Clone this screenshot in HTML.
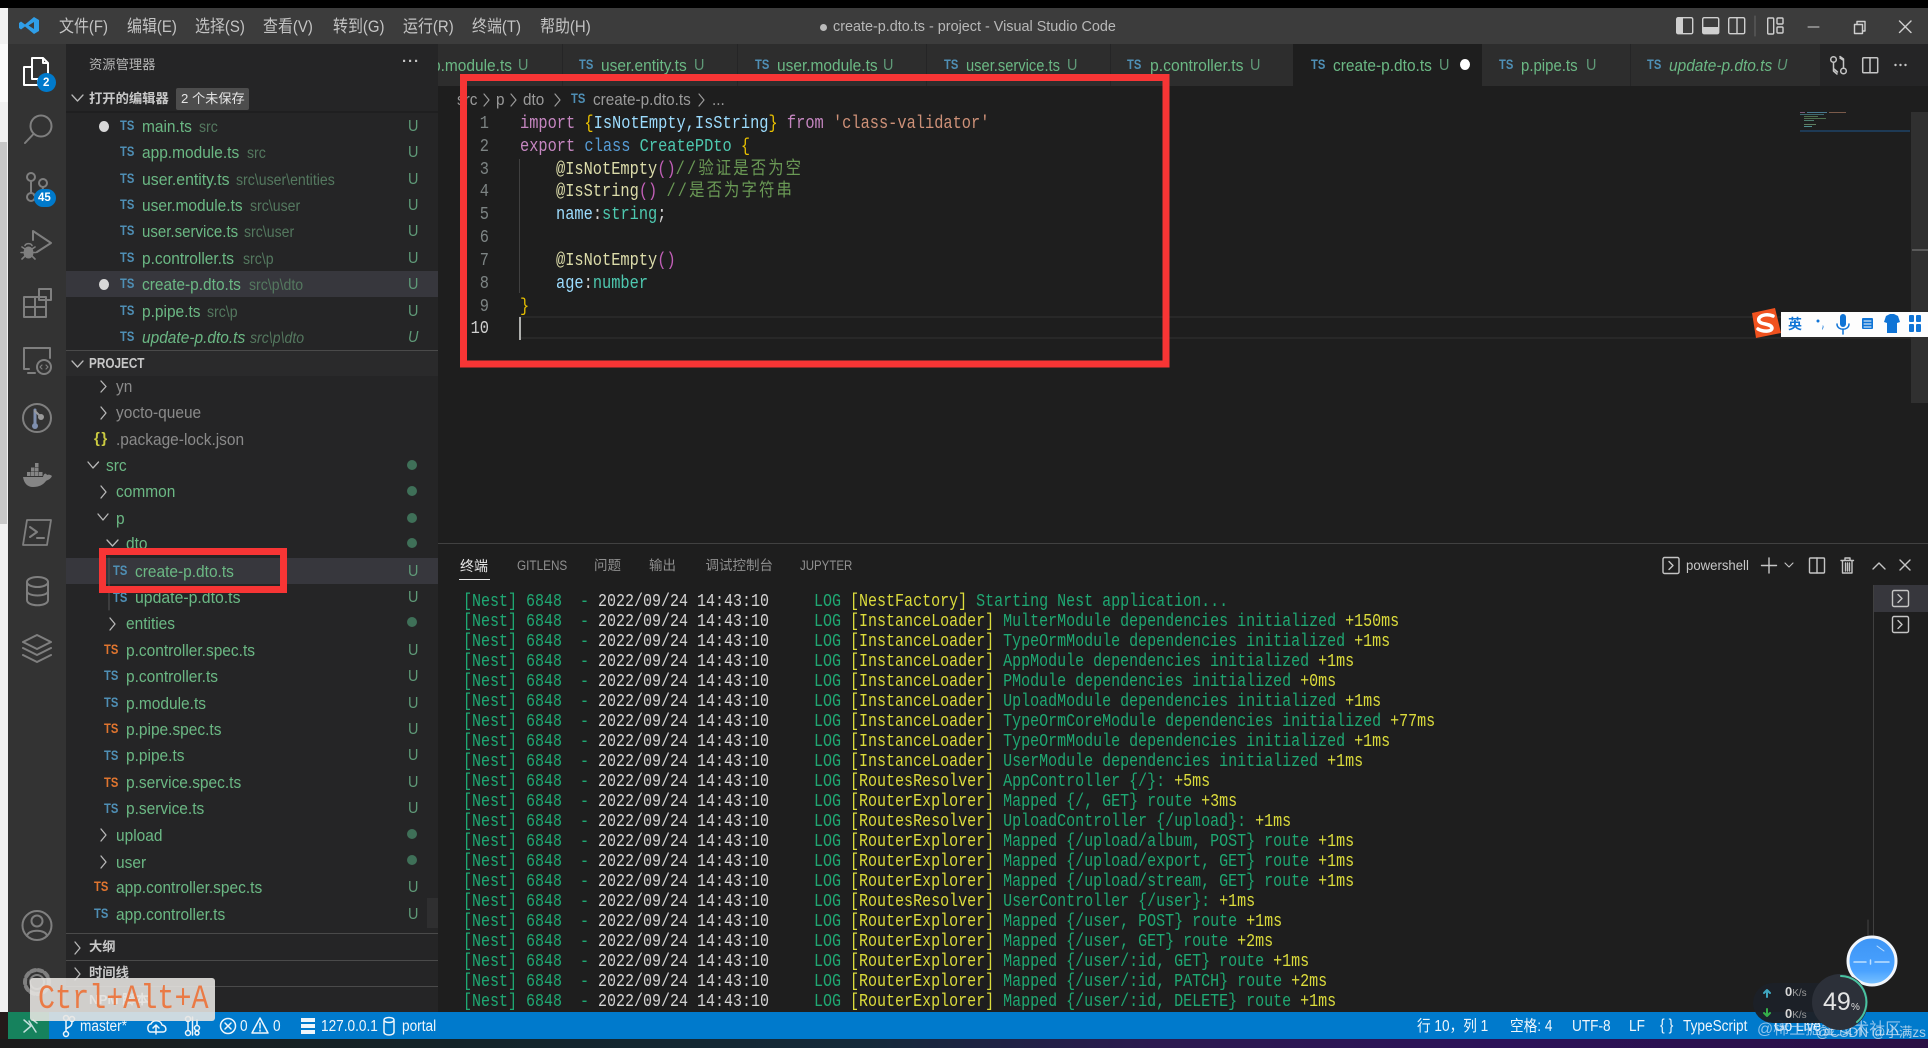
<!DOCTYPE html>
<html><head><meta charset="utf-8"><title>create-p.dto.ts</title>
<style>
html,body{margin:0;padding:0;background:#1e1e1e}
#r{position:relative;width:1928px;height:1048px;overflow:hidden;background:#1e1e1e;font-family:"Liberation Sans","Noto Sans CJK SC",sans-serif}
.b{position:absolute}
.s{position:absolute;white-space:pre;line-height:20px;transform-origin:0 50%}
.l{font-size:17px;transform:scaleX(.91);color:#6bb884}
.d{font-size:15.5px;transform:scaleX(.91);color:#54785f}
.f{font-size:17px;transform:scaleX(.91);color:#8a8a8a}
.u{font-size:16px;transform:scaleX(.9);color:#5f9a78;margin-top:1px}
.ts{font-size:14px;font-weight:bold;transform:scaleX(.8);color:#4f8fb5}
.o{color:#e0752f}
.m{font-size:17px;transform:scaleX(.88);color:#c4c4c4}
.h{font-size:13.3px;color:#b5b5b5}
.hb{font-size:13.3px;font-weight:bold;color:#c8c8c8}
.p{font-size:13.5px;color:#8f8f8f}
.st{font-size:15.5px;transform:scaleX(.88);color:#eef6fb;margin-top:1px}
.bc{font-size:17px;transform:scaleX(.9);color:#9a9a9a}
.ct{font:18px/23px "Liberation Mono","Noto Sans CJK SC",monospace;transform:scaleX(.852);white-space:pre;position:absolute;transform-origin:0 50%;color:#9cdcfe}
.ct s{text-decoration:none;color:#6a9955;letter-spacing:2.5px}
.n{font:18px/23px "Liberation Mono",monospace;transform:scaleX(.852);position:absolute;color:#7d8484;text-align:right;width:32px;transform-origin:100% 50%;left:457px}
.pu{color:#c586c0}.go{color:#e8c000}.st1{color:#ce9178}.bl{color:#569cd6}.te{color:#4ec9b0}.fn{color:#dcdcaa}.pa{color:#c25fb8}.wh{color:#d4d4d4}
#t{position:absolute;left:463px;top:592px;font:18px/20px "Liberation Mono",monospace;transform:scaleX(.8333);transform-origin:0 0;white-space:pre;color:#1fa873}
#t i{font-style:normal;color:#d4d4d4}
#t b{font-weight:normal;color:#dcdc3c}
</style></head><body><div id="r">

<!-- window frame -->
<div class="b" style="left:0;top:0;width:1928px;height:8px;background:#000"></div>
<div class="b" style="left:0;top:8px;width:8px;height:1004px;background:#f1f1f1"></div>
<div class="b" style="left:0;top:44px;width:10px;height:58px;background:#fafafa"></div>
<div class="b" style="left:0;top:142px;width:7px;height:382px;background:#c8c8c8"></div>
<div class="b" style="left:0;top:1012px;width:8px;height:36px;background:#241a1a"></div>
<div class="b" style="left:8px;top:8px;width:1920px;height:36px;background:#3c3c3c"></div>
<div class="b" style="left:8px;top:44px;width:58px;height:968px;background:#333"></div>
<div class="b" style="left:66px;top:44px;width:372px;height:968px;background:#252526"></div>

<!-- tabs bar -->
<div class="b" style="left:438px;top:44px;width:1490px;height:42px;background:#252526"></div>
<div class="b" style="left:438px;top:44px;width:124px;height:42px;background:#2d2d2d;overflow:hidden"><span class="s l" style="left:-6px;top:12px">p.module.ts</span></div>
<div class="b" style="left:563px;top:44px;width:174px;height:42px;background:#2d2d2d"></div>
<div class="b" style="left:738px;top:44px;width:188px;height:42px;background:#2d2d2d"></div>
<div class="b" style="left:927px;top:44px;width:183px;height:42px;background:#2d2d2d"></div>
<div class="b" style="left:1111px;top:44px;width:182px;height:42px;background:#2d2d2d"></div>
<div class="b" style="left:1293px;top:44px;width:189px;height:42px;background:#1e1e1e"></div>
<div class="b" style="left:1482px;top:44px;width:148px;height:42px;background:#2d2d2d"></div>
<div class="b" style="left:1631px;top:44px;width:189px;height:42px;background:#2d2d2d"></div>

<!-- menu -->
<span class="s m" style="left:59px;top:17px">文件(F)</span>
<span class="s m" style="left:127px;top:17px">编辑(E)</span>
<span class="s m" style="left:195px;top:17px">选择(S)</span>
<span class="s m" style="left:263px;top:17px">查看(V)</span>
<span class="s m" style="left:333px;top:17px">转到(G)</span>
<span class="s m" style="left:403px;top:17px">运行(R)</span>
<span class="s m" style="left:472px;top:17px">终端(T)</span>
<span class="s m" style="left:540px;top:17px">帮助(H)</span>
<div class="b" style="left:820px;top:24px;width:7px;height:7px;border-radius:50%;background:#bbb"></div>
<span class="s" style="left:833px;top:17px;font-size:14.4px;color:#b8b8b8">create-p.dto.ts - project - Visual Studio Code</span>

<!-- tab labels -->
<span class="s u" style="left:518px;top:55px">U</span>
<span class="s ts" style="left:579px;top:54px">TS</span><span class="s l" style="left:601px;top:56px">user.entity.ts</span><span class="s u" style="left:694px;top:55px">U</span>
<span class="s ts" style="left:755px;top:54px">TS</span><span class="s l" style="left:777px;top:56px">user.module.ts</span><span class="s u" style="left:883px;top:55px">U</span>
<span class="s ts" style="left:944px;top:54px">TS</span><span class="s l" style="left:966px;top:56px;transform:scaleX(.865)">user.service.ts</span><span class="s u" style="left:1067px;top:55px">U</span>
<span class="s ts" style="left:1127px;top:54px">TS</span><span class="s l" style="left:1150px;top:56px;transform:scaleX(.925)">p.controller.ts</span><span class="s u" style="left:1250px;top:55px">U</span>
<span class="s ts" style="left:1311px;top:54px">TS</span><span class="s l" style="left:1333px;top:56px">create-p.dto.ts</span><span class="s u" style="left:1439px;top:55px">U</span>
<div class="b" style="left:1460px;top:59px;width:10px;height:11px;border-radius:50%;background:#fff"></div>
<span class="s ts" style="left:1499px;top:54px">TS</span><span class="s l" style="left:1521px;top:56px;transform:scaleX(.88)">p.pipe.ts</span><span class="s u" style="left:1586px;top:55px">U</span>
<span class="s ts" style="left:1647px;top:54px">TS</span><span class="s l" style="left:1669px;top:56px;font-style:italic">update-p.dto.ts</span><span class="s u" style="left:1777px;top:55px;font-style:italic">U</span>

<!-- sidebar headers -->
<span class="s h" style="left:89px;top:55px">资源管理器</span>
<span class="s" style="left:402px;top:52px;color:#c5c5c5;font-size:15px;font-weight:bold;letter-spacing:1px">···</span>
<span class="s hb" style="left:89px;top:89px">打开的编辑器</span>
<div class="b" style="left:176px;top:88px;width:73px;height:22px;background:#4d4d4d;border-radius:2px"></div>
<span class="s" style="left:181px;top:89px;font-size:13.2px;color:#e4e4e4">2 个未保存</span>
<div class="b" style="left:66px;top:111px;width:372px;height:2px;background:#1f1f20"></div>
<div class="b" style="left:66px;top:350px;width:372px;height:26px;background:#2a2a2b;border-top:1px solid #4a4a4a;box-sizing:border-box"></div>
<span class="s hb" style="left:89px;top:354px;font-size:14.5px;transform:scaleX(.81)">PROJECT</span>
<div class="b" style="left:66px;top:271px;width:372px;height:26px;background:#37373d"></div>
<div class="b" style="left:66px;top:558px;width:372px;height:26px;background:#37373d"></div>

<!-- open editors -->
<div class="b" style="left:99px;top:121px;width:10px;height:11px;border-radius:50%;background:#d8d8d8"></div>
<div class="b" style="left:99px;top:279px;width:10px;height:11px;border-radius:50%;background:#d8d8d8"></div>
<span class="s ts" style="left:120px;top:115px">TS</span><span class="s l" style="left:142px;top:117px">main.ts</span><span class="s d" style="left:199px;top:118px">src</span><span class="s u" style="left:408px;top:116px">U</span>
<span class="s ts" style="left:120px;top:141px">TS</span><span class="s l" style="left:142px;top:143px">app.module.ts</span><span class="s d" style="left:247px;top:144px">src</span><span class="s u" style="left:408px;top:142px">U</span>
<span class="s ts" style="left:120px;top:168px">TS</span><span class="s l" style="left:142px;top:170px;transform:scaleX(.93)">user.entity.ts</span><span class="s d" style="left:236px;top:171px">src\user\entities</span><span class="s u" style="left:408px;top:169px">U</span>
<span class="s ts" style="left:120px;top:194px">TS</span><span class="s l" style="left:142px;top:196px">user.module.ts</span><span class="s d" style="left:250px;top:197px">src\user</span><span class="s u" style="left:408px;top:195px">U</span>
<span class="s ts" style="left:120px;top:220px">TS</span><span class="s l" style="left:142px;top:222px;transform:scaleX(.885)">user.service.ts</span><span class="s d" style="left:244px;top:223px">src\user</span><span class="s u" style="left:408px;top:221px">U</span>
<span class="s ts" style="left:120px;top:247px">TS</span><span class="s l" style="left:142px;top:249px">p.controller.ts</span><span class="s d" style="left:243px;top:250px">src\p</span><span class="s u" style="left:408px;top:248px">U</span>
<span class="s ts" style="left:120px;top:273px">TS</span><span class="s l" style="left:142px;top:275px">create-p.dto.ts</span><span class="s d" style="left:249px;top:276px">src\p\dto</span><span class="s u" style="left:408px;top:274px">U</span>
<span class="s ts" style="left:120px;top:300px">TS</span><span class="s l" style="left:142px;top:302px">p.pipe.ts</span><span class="s d" style="left:207px;top:303px">src\p</span><span class="s u" style="left:408px;top:301px">U</span>
<span class="s ts" style="left:120px;top:326px">TS</span><span class="s l" style="left:142px;top:328px;font-style:italic">update-p.dto.ts</span><span class="s d" style="left:250px;top:329px;font-style:italic">src\p\dto</span><span class="s u" style="left:408px;top:327px;font-style:italic">U</span>

<!-- tree -->
<span class="s f" style="left:116px;top:377px">yn</span>
<span class="s f" style="left:116px;top:403px">yocto-queue</span>
<span class="s" style="left:94px;top:429px;font-size:15px;font-weight:bold;color:#cbcb41;letter-spacing:1.5px">{}</span>
<span class="s f" style="left:116px;top:430px">.package-lock.json</span>
<span class="s l" style="left:106px;top:456px">src</span>
<span class="s l" style="left:116px;top:482px">common</span>
<span class="s l" style="left:116px;top:509px">p</span>
<span class="s l" style="left:126px;top:534px">dto</span>
<span class="s ts" style="left:113px;top:560px">TS</span><span class="s l" style="left:135px;top:562px">create-p.dto.ts</span><span class="s u" style="left:408px;top:561px">U</span>
<span class="s ts" style="left:113px;top:587px">TS</span><span class="s l" style="left:135px;top:588px;transform:scaleX(.93)">update-p.dto.ts</span><span class="s u" style="left:408px;top:587px">U</span>
<span class="s l" style="left:126px;top:614px">entities</span>
<span class="s ts o" style="left:104px;top:639px">TS</span><span class="s l" style="left:126px;top:641px">p.controller.spec.ts</span><span class="s u" style="left:408px;top:640px">U</span>
<span class="s ts" style="left:104px;top:665px">TS</span><span class="s l" style="left:126px;top:667px">p.controller.ts</span><span class="s u" style="left:408px;top:666px">U</span>
<span class="s ts" style="left:104px;top:692px">TS</span><span class="s l" style="left:126px;top:694px">p.module.ts</span><span class="s u" style="left:408px;top:693px">U</span>
<span class="s ts o" style="left:104px;top:718px">TS</span><span class="s l" style="left:126px;top:720px">p.pipe.spec.ts</span><span class="s u" style="left:408px;top:719px">U</span>
<span class="s ts" style="left:104px;top:745px">TS</span><span class="s l" style="left:126px;top:746px">p.pipe.ts</span><span class="s u" style="left:408px;top:745px">U</span>
<span class="s ts o" style="left:104px;top:772px">TS</span><span class="s l" style="left:126px;top:773px">p.service.spec.ts</span><span class="s u" style="left:408px;top:772px">U</span>
<span class="s ts" style="left:104px;top:798px">TS</span><span class="s l" style="left:126px;top:799px">p.service.ts</span><span class="s u" style="left:408px;top:798px">U</span>
<span class="s l" style="left:116px;top:826px">upload</span>
<span class="s l" style="left:116px;top:853px">user</span>
<span class="s ts o" style="left:94px;top:876px">TS</span><span class="s l" style="left:116px;top:878px">app.controller.spec.ts</span><span class="s u" style="left:408px;top:877px">U</span>
<span class="s ts" style="left:94px;top:903px">TS</span><span class="s l" style="left:116px;top:905px">app.controller.ts</span><span class="s u" style="left:408px;top:904px">U</span>

<div class="b" style="left:427px;top:898px;width:11px;height:30px;background:#2f2f30"></div>
<div class="b" style="left:66px;top:933px;width:372px;height:1px;background:#4a4a4a"></div>
<div class="b" style="left:66px;top:960px;width:372px;height:1px;background:#4a4a4a"></div>
<div class="b" style="left:66px;top:986px;width:372px;height:1px;background:#4a4a4a"></div>
<span class="s hb" style="left:89px;top:937px">大纲</span>
<span class="s hb" style="left:89px;top:963px">时间线</span>
<span class="s hb" style="left:89px;top:990px">NPM 脚本</span>

<!-- breadcrumbs -->
<span class="s bc" style="left:457px;top:90px">src</span>
<span class="s bc" style="left:496px;top:90px">p</span>
<span class="s bc" style="left:523px;top:90px">dto</span>
<span class="s ts" style="left:571px;top:88px">TS</span>
<span class="s bc" style="left:593px;top:90px">create-p.dto.ts</span>
<span class="s bc" style="left:712px;top:90px">...</span>

<!-- editor -->
<div class="b" style="left:519px;top:316px;width:1392px;height:23px;border-top:2px solid #282828;border-bottom:2px solid #282828;box-sizing:border-box"></div>
<div class="b" style="left:519px;top:159px;width:1px;height:134px;background:#404040"></div>
<div class="b" style="left:519px;top:317px;width:2px;height:23px;background:#aeafad"></div>

<span class="n" style="top:113px">1</span>
<span class="n" style="top:136px">2</span>
<span class="n" style="top:159px">3</span>
<span class="n" style="top:181px">4</span>
<span class="n" style="top:204px">5</span>
<span class="n" style="top:227px">6</span>
<span class="n" style="top:250px">7</span>
<span class="n" style="top:273px">8</span>
<span class="n" style="top:296px">9</span>
<span class="n" style="top:318px;color:#d0d0d0">10</span>

<span class="ct" style="left:519.5px;top:113px"><span class="pu">import</span> <span class="go">{</span>IsNotEmpty,IsString<span class="go">}</span> <span class="pu">from</span> <span class="st1">'class-validator'</span></span>
<span class="ct" style="left:519.5px;top:136px"><span class="pu">export</span> <span class="bl">class</span> <span class="te">CreatePDto</span> <span class="go">{</span></span>
<span class="ct" style="left:555.5px;top:159px"><span class="fn">@IsNotEmpty</span><span class="pa">()</span><s>//</s><s>验证是否为空</s></span>
<span class="ct" style="left:555.5px;top:181px"><span class="fn">@IsString</span><span class="pa">()</span> <s>//</s><s>是否为字符串</s></span>
<span class="ct" style="left:555.5px;top:204px">name<span class="wh">:</span><span class="te">string</span><span class="wh">;</span></span>
<span class="ct" style="left:555.5px;top:250px"><span class="fn">@IsNotEmpty</span><span class="pa">()</span></span>
<span class="ct" style="left:555.5px;top:273px">age<span class="wh">:</span><span class="te">number</span></span>
<span class="ct" style="left:519.5px;top:296px"><span class="go">}</span></span>

<!-- minimap and scrollbar -->
<div class="b" style="left:1800px;top:112px;width:5px;height:1px;background:#7a5a7a"></div>
<div class="b" style="left:1807px;top:112px;width:20px;height:1px;background:#4a7a90"></div>
<div class="b" style="left:1829px;top:112px;width:17px;height:1px;background:#7a5a4a"></div>
<div class="b" style="left:1800px;top:114px;width:24px;height:1px;background:#3f6a70"></div>
<div class="b" style="left:1804px;top:116px;width:14px;height:1px;background:#4f6f4f"></div>
<div class="b" style="left:1804px;top:118px;width:22px;height:1px;background:#4f6f4f"></div>
<div class="b" style="left:1804px;top:120px;width:10px;height:1px;background:#4f7f6f"></div>
<div class="b" style="left:1804px;top:124px;width:12px;height:1px;background:#5f7f60"></div>
<div class="b" style="left:1804px;top:126px;width:8px;height:1px;background:#4f8f8f"></div>
<div class="b" style="left:1800px;top:130px;width:110px;height:2px;background:#1e3a55"></div>
<div class="b" style="left:1911px;top:112px;width:17px;height:291px;background:#303030"></div>
<div class="b" style="left:1912px;top:249px;width:16px;height:2px;background:#5a5a5a"></div>

<!-- panel -->
<div class="b" style="left:438px;top:543px;width:1490px;height:1px;background:#414141"></div>
<span class="s p" style="left:460px;top:556px;color:#e8e8e8;font-size:14px">终端</span>
<div class="b" style="left:459px;top:579px;width:31px;height:1px;background:#e8e8e8"></div>
<span class="s p" style="left:516.5px;top:556px;transform:scaleX(.87)">GITLENS</span>
<span class="s p" style="left:594px;top:556px">问题</span>
<span class="s p" style="left:649px;top:556px">输出</span>
<span class="s p" style="left:705.5px;top:556px">调试控制台</span>
<span class="s p" style="left:799.5px;top:556px;transform:scaleX(.85)">JUPYTER</span>
<span class="s" style="left:1686px;top:555px;font-size:14px;color:#c8c8c8;transform:scaleX(.94)">powershell</span>
<div class="b" style="left:1873px;top:585px;width:55px;height:27px;background:#37373d"></div>
<div class="b" style="left:1873px;top:585px;width:1px;height:380px;background:#404040"></div>

<div id="t">[Nest] 6848  - <i>2022/09/24 14:43:10</i>     LOG <b>[NestFactory]</b> Starting Nest application...
[Nest] 6848  - <i>2022/09/24 14:43:10</i>     LOG <b>[InstanceLoader]</b> MulterModule dependencies initialized <b>+150ms</b>
[Nest] 6848  - <i>2022/09/24 14:43:10</i>     LOG <b>[InstanceLoader]</b> TypeOrmModule dependencies initialized <b>+1ms</b>
[Nest] 6848  - <i>2022/09/24 14:43:10</i>     LOG <b>[InstanceLoader]</b> AppModule dependencies initialized <b>+1ms</b>
[Nest] 6848  - <i>2022/09/24 14:43:10</i>     LOG <b>[InstanceLoader]</b> PModule dependencies initialized <b>+0ms</b>
[Nest] 6848  - <i>2022/09/24 14:43:10</i>     LOG <b>[InstanceLoader]</b> UploadModule dependencies initialized <b>+1ms</b>
[Nest] 6848  - <i>2022/09/24 14:43:10</i>     LOG <b>[InstanceLoader]</b> TypeOrmCoreModule dependencies initialized <b>+77ms</b>
[Nest] 6848  - <i>2022/09/24 14:43:10</i>     LOG <b>[InstanceLoader]</b> TypeOrmModule dependencies initialized <b>+1ms</b>
[Nest] 6848  - <i>2022/09/24 14:43:10</i>     LOG <b>[InstanceLoader]</b> UserModule dependencies initialized <b>+1ms</b>
[Nest] 6848  - <i>2022/09/24 14:43:10</i>     LOG <b>[RoutesResolver]</b> AppController {/}: <b>+5ms</b>
[Nest] 6848  - <i>2022/09/24 14:43:10</i>     LOG <b>[RouterExplorer]</b> Mapped {/, GET} route <b>+3ms</b>
[Nest] 6848  - <i>2022/09/24 14:43:10</i>     LOG <b>[RoutesResolver]</b> UploadController {/upload}: <b>+1ms</b>
[Nest] 6848  - <i>2022/09/24 14:43:10</i>     LOG <b>[RouterExplorer]</b> Mapped {/upload/album, POST} route <b>+1ms</b>
[Nest] 6848  - <i>2022/09/24 14:43:10</i>     LOG <b>[RouterExplorer]</b> Mapped {/upload/export, GET} route <b>+1ms</b>
[Nest] 6848  - <i>2022/09/24 14:43:10</i>     LOG <b>[RouterExplorer]</b> Mapped {/upload/stream, GET} route <b>+1ms</b>
[Nest] 6848  - <i>2022/09/24 14:43:10</i>     LOG <b>[RoutesResolver]</b> UserController {/user}: <b>+1ms</b>
[Nest] 6848  - <i>2022/09/24 14:43:10</i>     LOG <b>[RouterExplorer]</b> Mapped {/user, POST} route <b>+1ms</b>
[Nest] 6848  - <i>2022/09/24 14:43:10</i>     LOG <b>[RouterExplorer]</b> Mapped {/user, GET} route <b>+2ms</b>
[Nest] 6848  - <i>2022/09/24 14:43:10</i>     LOG <b>[RouterExplorer]</b> Mapped {/user/:id, GET} route <b>+1ms</b>
[Nest] 6848  - <i>2022/09/24 14:43:10</i>     LOG <b>[RouterExplorer]</b> Mapped {/user/:id, PATCH} route <b>+2ms</b>
[Nest] 6848  - <i>2022/09/24 14:43:10</i>     LOG <b>[RouterExplorer]</b> Mapped {/user/:id, DELETE} route <b>+1ms</b></div>

<!-- status bar -->
<div class="b" style="left:8px;top:1012px;width:1920px;height:27px;background:#007acc"></div>
<div class="b" style="left:8px;top:1012px;width:41px;height:27px;background:#16825d"></div>
<div class="b" style="left:0;top:1039px;width:1928px;height:9px;background:linear-gradient(90deg,#1c1c1c 0,#14252a 25%,#152a3a 45%,#2c1a50 60%,#2c1259 78%,#2a1044 100%)"></div>
<span class="s st" style="left:79.5px;top:1016px">master*</span>
<span class="s st" style="left:240px;top:1016px">0</span>
<span class="s st" style="left:273px;top:1016px">0</span>
<span class="s st" style="left:321px;top:1016px">127.0.0.1</span>
<span class="s st" style="left:401.5px;top:1016px">portal</span>
<span class="s st" style="left:1417px;top:1016px">行 10，列 1</span>
<span class="s st" style="left:1510px;top:1016px">空格: 4</span>
<span class="s st" style="left:1572px;top:1016px">UTF-8</span>
<span class="s st" style="left:1629px;top:1016px">LF</span>
<span class="s st" style="left:1660px;top:1015px;font-size:16px">{ }</span>
<span class="s st" style="left:1683px;top:1016px">TypeScript</span>
<span class="s st" style="left:1774px;top:1016px">Go Live</span>
<span class="s" style="left:1757px;top:1020px;font-size:16px;color:rgba(190,220,245,.75)">@稀土掘金技术社区</span>
<span class="s" style="left:1816px;top:1023px;font-size:13.5px;color:rgba(235,240,245,.7)">@CSDN @小满zs</span>

<!-- icons -->
<svg class="b" style="left:0;top:0" width="1928" height="1048" viewBox="0 0 1928 1048" fill="none" stroke-linecap="round" stroke-linejoin="round">
<!-- vscode logo -->
<path d="M34 17 L39 20 L39 31 L34 34 L25 26.5 L21 29.5 L19 28 L19 23 L21 21.5 L25 24.5 Z M34 22 L28.500 25.500 L34 29 Z" fill="#2f9ee8" fill-rule="evenodd"/>

<!-- tree chevrons -->
<g stroke="#b8b8b8" stroke-width="1.3">
<path d="M72 95 L77.500 101 L83 95"/>
<path d="M72 361 L77.500 367 L83 361"/>
<path d="M101 381 L106 386.500 L101 392"/>
<path d="M101 407 L106 413 L101 419"/>
<path d="M88 462 L93 468 L98.500 462"/>
<path d="M101 486 L106 492 L101 498"/>
<path d="M98 514 L103 520 L108 514"/>
<path d="M107 540 L112.500 546 L118 540"/>
<path d="M110 618 L115 624 L110 630"/>
<path d="M101 829 L106 835 L101 841"/>
<path d="M101 856 L106 862 L101 868"/>
<path d="M75 942 L80 948 L75 954"/>
<path d="M75 968 L80 974 L75 980"/>
</g>
<!-- indent guide in tree -->
<path d="M109 558 V610" stroke="#555"/>
<!-- git dots -->
<g fill="#3f7058">
<circle cx="412" cy="465" r="5"/><circle cx="412" cy="491" r="5"/><circle cx="412" cy="518" r="5"/><circle cx="412" cy="543" r="5"/><circle cx="412" cy="622" r="5"/><circle cx="412" cy="834" r="5"/><circle cx="412" cy="860" r="5"/>
</g>
<!-- breadcrumb chevrons -->
<g stroke="#9a9a9a" stroke-width="1.2">
<path d="M484 94 L489 100 L484 106"/><path d="M511 94 L516 100 L511 106"/><path d="M555 94 L560 100 L555 106"/><path d="M699 94 L704 100 L699 106"/>
</g>

<!-- activity bar -->
<g stroke="#fff" stroke-width="2">
<path d="M32 73 V58 H43 L48 63 V79 H32 Z M43 58 V63 H48"/>
<path d="M32 67 H24 V85 H38 V79"/>
</g>
<circle cx="46.500" cy="82.500" r="9.500" fill="#007acc"/>
<g stroke="#7f7f7f" stroke-width="2">
<circle cx="41" cy="126" r="10.500"/><path d="M33.500 134 L25 143"/>
<circle cx="31" cy="177" r="4"/><circle cx="43" cy="183" r="4"/><circle cx="31" cy="197" r="4"/><path d="M31 181 V193 M43 187 C43 193 36 194 34 195"/>
<path d="M33 240 V231 L51 243 L37 252"/>
<ellipse cx="28.500" cy="252.500" rx="4.500" ry="5.500" fill="#7f7f7f" stroke-width="1"/><path d="M25 245.500 C26 243 31 243 32 245.500 M22 247 L25 249 M35 247 L32 249 M21 252.500 H24 M33 252.500 H36 M22 259 L25 256 M35 259 L32 256" stroke-width="1.600"/>
<path d="M24 297 H35 V317 H24 Z M35 297 H46 V317 H35 M24 307 H46"/><rect x="39" y="289" width="12" height="11"/>
<path d="M29 369 H24 V348 H50 V358 M35 373 H28"/><circle cx="44" cy="367" r="7"/><path d="M42 365 L40 367 L42 369 M46 365 L48 367 L46 369" stroke-width="1.200"/>
<circle cx="37" cy="418" r="14"/>
<path d="M27 520 H51 L47 545 H23 Z" stroke-width="1.800"/><path d="M30 527 L37 532 L30 537 M37 538 H44"/>
<ellipse cx="37.500" cy="582" rx="10.500" ry="5"/><path d="M27 582 V600 C27 607 48 607 48 600 V582 M27 591 C27 597 48 597 48 591"/>
<path d="M37 635 L51 642 L37 649 L23 642 Z M23 648 L37 655 L51 648 M23 655 L37 662 L51 655"/>
<circle cx="37" cy="925.500" r="14.500"/><circle cx="37" cy="921" r="5.500"/><path d="M27 936 C28 929 46 929 47 936"/>
<circle cx="37" cy="982" r="7"/>
<circle cx="37" cy="982" r="12" stroke-width="4" stroke-dasharray="4 3.200"/>
</g>
<path d="M35 410 V426" stroke="#7f8fae" stroke-width="3"/><circle cx="35" cy="426" r="3" fill="#7f8fae"/><circle cx="41" cy="417" r="3" fill="#9a9a9a"/><path d="M35 411 L41 417" stroke="#9a9a9a" stroke-width="2"/>
<!-- docker -->
<path d="M23 477 H43 C44 473 46 473 47 475 C49 474 51 475 52 476 C50 480 47 480 46 481 C43 485 39 487 33 487 C27 487 24 483 23 477 Z" fill="#858585"/>
<g fill="#858585"><rect x="27" y="472" width="3.500" height="4"/><rect x="31" y="472" width="3.500" height="4"/><rect x="35" y="472" width="3.500" height="4"/><rect x="39" y="472" width="3.500" height="4"/><rect x="31" y="467.500" width="3.500" height="4"/><rect x="35" y="467.500" width="3.500" height="4"/><rect x="35" y="463" width="3.500" height="4"/></g>
<!-- badges -->
<rect x="34" y="189" width="22" height="18" rx="9" fill="#007acc"/>
</svg>
<span class="s" style="left:43px;top:73px;font-size:11.5px;font-weight:bold;color:#fff">2</span>
<span class="s" style="left:38px;top:188px;font-size:11.5px;font-weight:bold;color:#fff">45</span>

<svg class="b" style="left:0;top:0" width="1928" height="1048" viewBox="0 0 1928 1048" fill="none" stroke-linecap="round" stroke-linejoin="round">
<!-- title layout controls -->
<g stroke="#cfcfcf" stroke-width="1.400">
<rect x="1676.700" y="17.700" width="16" height="16" rx="1.500"/><rect x="1702.700" y="17.700" width="16" height="16" rx="1.500"/><rect x="1728.700" y="17.700" width="16" height="16" rx="1.500"/><path d="M1737 18 V33"/>
<rect x="1767.700" y="18" width="6" height="16" rx="1"/><rect x="1777" y="18" width="6" height="6" rx="1"/><rect x="1777" y="27" width="6" height="6" rx="1"/>
<path d="M1808 27 H1819" stroke-width="1"/><rect x="1854.500" y="24.500" width="8" height="9"/><path d="M1857 24 V21.500 H1865 V31 H1862.500"/><path d="M1899.500 21 L1911 32.500 M1911 21 L1899.500 32.500"/>
</g>
<rect x="1677" y="18" width="6" height="16" fill="#cfcfcf"/>
<rect x="1703" y="27" width="15" height="6.500" fill="#cfcfcf"/>
<path d="M1755 16 V36" stroke="#666"/>

<!-- tab actions -->
<g stroke="#c5c5c5" stroke-width="1.500">
<circle cx="1833.500" cy="59.500" r="2.800"/><circle cx="1843.500" cy="71" r="2.800"/><path d="M1833.500 62.500 V71 L1837 74 M1843.500 68 V59 L1840 56.500 M1837.500 72 L1834 69 M1840 58 L1843 60"/>
<rect x="1862.700" y="57.700" width="15" height="15" rx="1"/><path d="M1870 58 V72"/>
</g>
<g fill="#c5c5c5"><circle cx="1895.500" cy="65" r="1.200"/><circle cx="1900.500" cy="65" r="1.200"/><circle cx="1905.500" cy="65" r="1.200"/></g>

<!-- panel actions -->
<g stroke="#c5c5c5" stroke-width="1.400">
<rect x="1663" y="557.500" width="16" height="16" rx="1.500"/><path d="M1669 561.500 L1673 565.500 L1669 569.500"/>
<path d="M1769 558 V573 M1761.500 565.500 H1776.500"/><path d="M1785 563 L1789 567 L1793 563" stroke-width="1.100"/>
<rect x="1809.500" y="558" width="15" height="15" rx="1"/><path d="M1817 558 V573"/>
<path d="M1841 560.500 H1853.500 M1845 560.500 V558 H1850 V560.500 M1842.500 561 V573 H1852 V561 M1845.500 563 V571 M1847.500 563 V571 M1849.500 563 V571"/>
<path d="M1873 569 L1879 563 L1885 569"/><path d="M1900 560 L1910 570 M1910 560 L1900 570"/>
<rect x="1892.500" y="590.500" width="16" height="16" rx="1.500"/><path d="M1898 594.500 L1902 598.500 L1898 602.500"/>
<rect x="1892.500" y="616.500" width="16" height="16" rx="1.500"/><path d="M1898 620.500 L1902 624.500 L1898 628.500"/>
</g>

<!-- status icons -->
<g stroke="#eef6fb" stroke-width="1.500">
<path d="M24 1020 L31 1026 L24 1032 M36 1032 L29 1021 M33 1020 L37 1023" opacity=".8"/>
<circle cx="66" cy="1018" r="2.500"/><circle cx="66" cy="1034" r="2.500"/><circle cx="72" cy="1019" r="2.500"/><path d="M66 1021 V1031 M72 1022 C72 1027 68 1027 66 1029"/>
<path d="M150 1032 H163 C167 1032 167 1026 162 1025 C161 1020 153 1019 151 1024 C147 1024 147 1031 150 1032 M156 1034 V1025 M153 1028 L156 1025 L159 1028"/>
<circle cx="188" cy="1019" r="2.500"/><circle cx="188" cy="1033" r="2.500"/><circle cx="197" cy="1028" r="2.500"/><circle cx="197" cy="1033" r="2"/><path d="M188 1021.500 V1030.500 M192.500 1017 V1035 M197 1020 V1025"/>
<circle cx="228" cy="1026" r="7.500"/><path d="M225 1023 L231 1029 M231 1023 L225 1029"/>
<path d="M260 1018 L268 1033 H252 Z M260 1023 V1028 M260 1030 V1031"/>
<path d="M384 1021 V1032 C384 1036 394 1036 394 1032 V1021"/><ellipse cx="389" cy="1020" rx="5" ry="2.500"/>
</g>
<g fill="#eef6fb"><rect x="301" y="1018" width="14" height="4"/><rect x="301" y="1024" width="14" height="4"/><rect x="301" y="1030" width="14" height="4"/></g>

<!-- red annotation boxes -->
<rect x="463.500" y="77.500" width="702.500" height="286.500" stroke="#f73535" stroke-width="7" stroke-linejoin="miter"/>
<rect x="102.500" y="551.500" width="181" height="38" stroke="#f73535" stroke-width="7" stroke-linejoin="miter"/>

<!-- globe -->
<line x1="1868" y1="920" x2="1868" y2="937" stroke="#444"/>
<defs><linearGradient id="gl" x1="0" y1="0" x2="0" y2="1"><stop offset="0" stop-color="#3d95f5"/><stop offset=".7" stop-color="#4aa2ff"/><stop offset="1" stop-color="#7cc4ff"/></linearGradient></defs>
<circle cx="1872" cy="961" r="24" fill="url(#gl)" stroke="#f2f6fb" stroke-width="3"/>
<path d="M1854 962 H1866 M1875 962 H1889 M1870.500 960 V964" stroke="#bfe0ff" stroke-width="1.500"/>
<path d="M1877 946 L1884 951" stroke="#bfe0ff"/>
<!-- speed widget -->
<rect x="1753" y="983" width="100" height="40" rx="20" fill="#1c2028" opacity=".96"/>
<circle cx="1840" cy="1002" r="28" fill="#2c3039"/>
<path d="M1841 976 A26 26 0 0 1 1857 1022" stroke="#49c3a0" stroke-width="2"/>
<path d="M1767 990 V997 M1764 993 L1767 990 L1770 993" stroke="#3fa6c0" stroke-width="2"/>
<path d="M1767 1009 V1016 M1764 1013 L1767 1016 L1770 1013" stroke="#35b04a" stroke-width="2"/>

<!-- sogou -->
<rect x="1781" y="312" width="147" height="25" fill="#fdfdfd"/>
<path d="M1752 313 L1775 308 L1781 333 L1756 338 Z" fill="#f0521f"/>
<path d="M1773 316 C1766 313 1757 316 1759 321 C1761 325 1771 323 1772 328 C1772 332 1763 332 1758 329" stroke="#fff" stroke-width="3.500"/>
<g fill="#0f74d6"><circle cx="1818" cy="321" r="1.500"/><path d="M1822 325 C1824 325 1824 328 1822 330 L1823 325 Z"/>
<rect x="1840" y="314" width="6" height="13" rx="3"/><rect x="1862" y="318" width="11" height="11" rx="1"/><path d="M1886 316 L1890 314 H1894 L1898 316 L1900 322 L1897 323 V333 H1887 V323 L1884 322 Z"/>
<rect x="1909" y="315" width="5" height="7" rx="1"/><rect x="1916" y="315" width="5" height="7" rx="1"/><rect x="1909" y="324" width="5" height="8" rx="1"/><rect x="1916" y="324" width="5" height="8" rx="1"/></g>
<path d="M1837 324 C1837 331 1849 331 1849 324 M1843 329 V334" stroke="#0f74d6" stroke-width="1.500"/>
<path d="M1864 321 H1871 M1864 324 H1871 M1864 327 H1871" stroke="#fff"/>
</svg>

<span class="s" style="left:1788px;top:314px;font-size:14px;font-weight:bold;color:#0f74d6">英</span>
<span class="s" style="left:1823px;top:992px;font-size:25px;color:#e4e4e4">49</span>
<span class="s" style="left:1851px;top:998px;font-size:10px;color:#ddd">%</span>
<span class="s" style="left:1785px;top:982px;font-size:13px;font-weight:bold;color:#d8d8d8">0<span style="font-size:10px;font-weight:normal;color:#999">K/s</span></span>
<span class="s" style="left:1785px;top:1004px;font-size:13px;font-weight:bold;color:#d8d8d8">0<span style="font-size:10px;font-weight:normal;color:#999">K/s</span></span>

<!-- Ctrl+Alt+A overlay -->
<div class="b" style="left:30px;top:978px;width:185px;height:43px;background:rgba(232,230,226,.88);border-radius:3px"></div>
<span class="s" style="left:37.500px;top:988px;font:34px/24px 'Liberation Mono',monospace;color:#ea7a45;transform:scaleX(.836);line-height:24px">Ctrl+Alt+A</span>

</div></body></html>
